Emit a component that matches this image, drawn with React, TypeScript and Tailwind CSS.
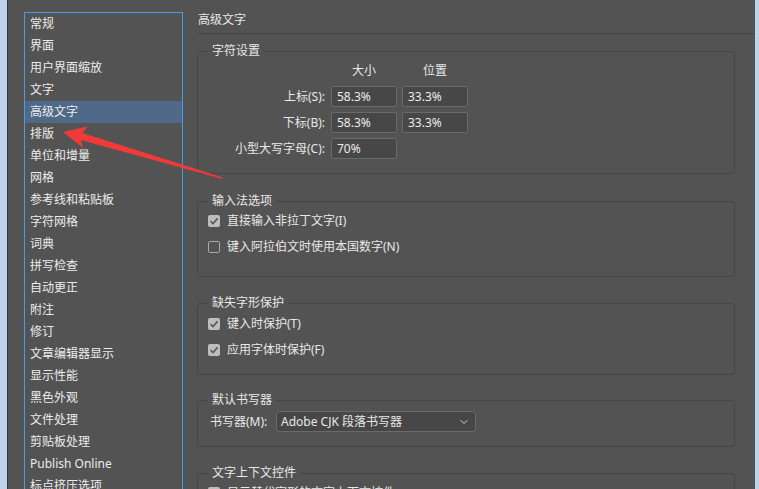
import { ChevronDown } from 'lucide-react';

const items = [
  '常规', '界面', '用户界面缩放', '文字', '高级文字', '排版', '单位和增量', '网格',
  '参考线和粘贴板', '字符网格', '词典', '拼写检查', '自动更正', '附注', '修订',
  '文章编辑器显示', '显示性能', '黑色外观', '文件处理', '剪贴板处理', 'Publish Online', '标点挤压选项',
];

const font = { fontFamily: '"Noto Sans", "Noto Sans CJK SC", sans-serif' };

const Check = ({ on }: { on?: boolean }) =>
  on ? (
    <span className="w-[12px] h-[12px] rounded-[2px] bg-[#bdbdbd] flex items-center justify-center">
      <svg width="10" height="10" viewBox="0 0 10 10">
        <path d="M1.5 5.2 L4 7.6 L8.6 2.4" fill="none" stroke="#5a5a5a" strokeWidth="1.6" />
      </svg>
    </span>
  ) : (
    <span className="w-[12px] h-[12px] rounded-[2px] border border-[#a8a8a8]" />
  );

const Group = ({ title, className, children }: { title: string; className: string; children: React.ReactNode }) => (
  <fieldset className={`border border-[#464646] rounded-[3px] mr-[20px] ${className}`}>
    <legend className="ml-[10px] px-[4px] leading-[16px] text-[12px] text-[#e8e8e8]">{title}</legend>
    {children}
  </fieldset>
);

const Field = ({ value }: { value: string }) => (
  <div className="w-[66px] h-[21px] rounded-[2px] border border-[#6a6a6a] bg-[#474747] pl-[5px] leading-[19px] text-[12px] text-[#ececec]">
    {value}
  </div>
);

export default function App() {
  return (
    <div className="relative w-[759px] h-[489px] overflow-hidden bg-[#535353] flex text-[12px]" style={font}>
      <div className="w-[7px] bg-[#bcd3ec]" />
      <div className="w-px bg-[#333]" />

      <div className="pl-[16px] pt-[12px]">
        <div className="w-[159px] h-[500px] border border-b-0 border-[#4a9ae8]">
          {items.map((it) => (
            <div
              key={it}
              className={`h-[22px] leading-[22px] pl-[5px] text-[#ececec] ${it === '高级文字' ? 'bg-[#4e6a88]' : ''}`}
            >
              {it}
            </div>
          ))}
        </div>
      </div>

      <div className="flex-1 pl-[14px]">
        <div className="pt-[12px] pl-px leading-[16px] text-[#e8e8e8]">高级文字</div>
        <div className="mt-[5px] h-px bg-[#464646]" />

        <Group title="字符设置" className="mt-[9px] pb-[14px]">
          <div className="mt-[4px] flex leading-[16px] text-[#e8e8e8]">
            <div className="w-[133px]" />
            <div className="w-[66px] text-center">大小</div>
            <div className="w-[5px]" />
            <div className="w-[66px] text-center">位置</div>
          </div>
          <div className="mt-[7px] flex flex-col gap-[5px]">
            {[
              ['上标(S):', '58.3%', '33.3%'],
              ['下标(B):', '58.3%', '33.3%'],
              ['小型大写字母(C):', '70%', ''],
            ].map(([l, a, b]) => (
              <div key={l} className="flex items-center">
                <div className="w-[127px] text-right text-[#e8e8e8]">{l}</div>
                <div className="ml-[6px]"><Field value={a} /></div>
                {b && <div className="ml-[5px]"><Field value={b} /></div>}
              </div>
            ))}
          </div>
        </Group>

        <Group title="输入法选项" className="mt-[19px] pb-[21px]">
          <div className="mt-[4px] flex flex-col gap-[10px] pl-[10px] text-[#e8e8e8]">
            <div className="h-[16px] flex items-center gap-[7px]"><Check on />直接输入非拉丁文字(I)</div>
            <div className="h-[16px] flex items-center gap-[7px]"><Check />键入阿拉伯文时使用本国数字(N)</div>
          </div>
        </Group>

        <Group title="缺失字形保护" className="mt-[18px] pb-[16px]">
          <div className="mt-[5px] flex flex-col gap-[10px] pl-[10px] text-[#e8e8e8]">
            <div className="h-[16px] flex items-center gap-[7px]"><Check on />键入时保护(T)</div>
            <div className="h-[16px] flex items-center gap-[7px]"><Check on />应用字体时保护(F)</div>
          </div>
        </Group>

        <Group title="默认书写器" className="mt-[17px] pb-[14px]">
          <div className="mt-[3px] flex items-center pl-[12px] text-[#e8e8e8]">
            <div className="w-[66px]">书写器(M):</div>
            <div className="w-[200px] h-[21px] rounded-[3px] border border-[#6a6a6a] bg-[#474747] flex items-center justify-between pl-[4px] pr-[5px]">
              <span>Adobe CJK 段落书写器</span>
              <ChevronDown size={12} color="#d0d0d0" />
            </div>
          </div>
        </Group>

        <Group title="文字上下文控件" className="mt-[18px] pb-[14px]">
          <div className="mt-[4px] flex flex-col gap-[10px] pl-[10px] text-[#e8e8e8]">
            <div className="h-[16px] flex items-center gap-[7px]"><Check on />显示替代字形的文字上下文控件</div>
          </div>
        </Group>
      </div>

      <div className="w-[4px] bg-[#bcd3ec]" />

      <svg className="absolute left-0 top-0 pointer-events-none" width="759" height="489">
        <polygon
          points="63,132 87.4,126.6 82.6,133.1 222.3,177.3 221.7,178.7 80.6,140.1 83.3,147.9"
          fill="#f03a3a"
        />
      </svg>
    </div>
  );
}
